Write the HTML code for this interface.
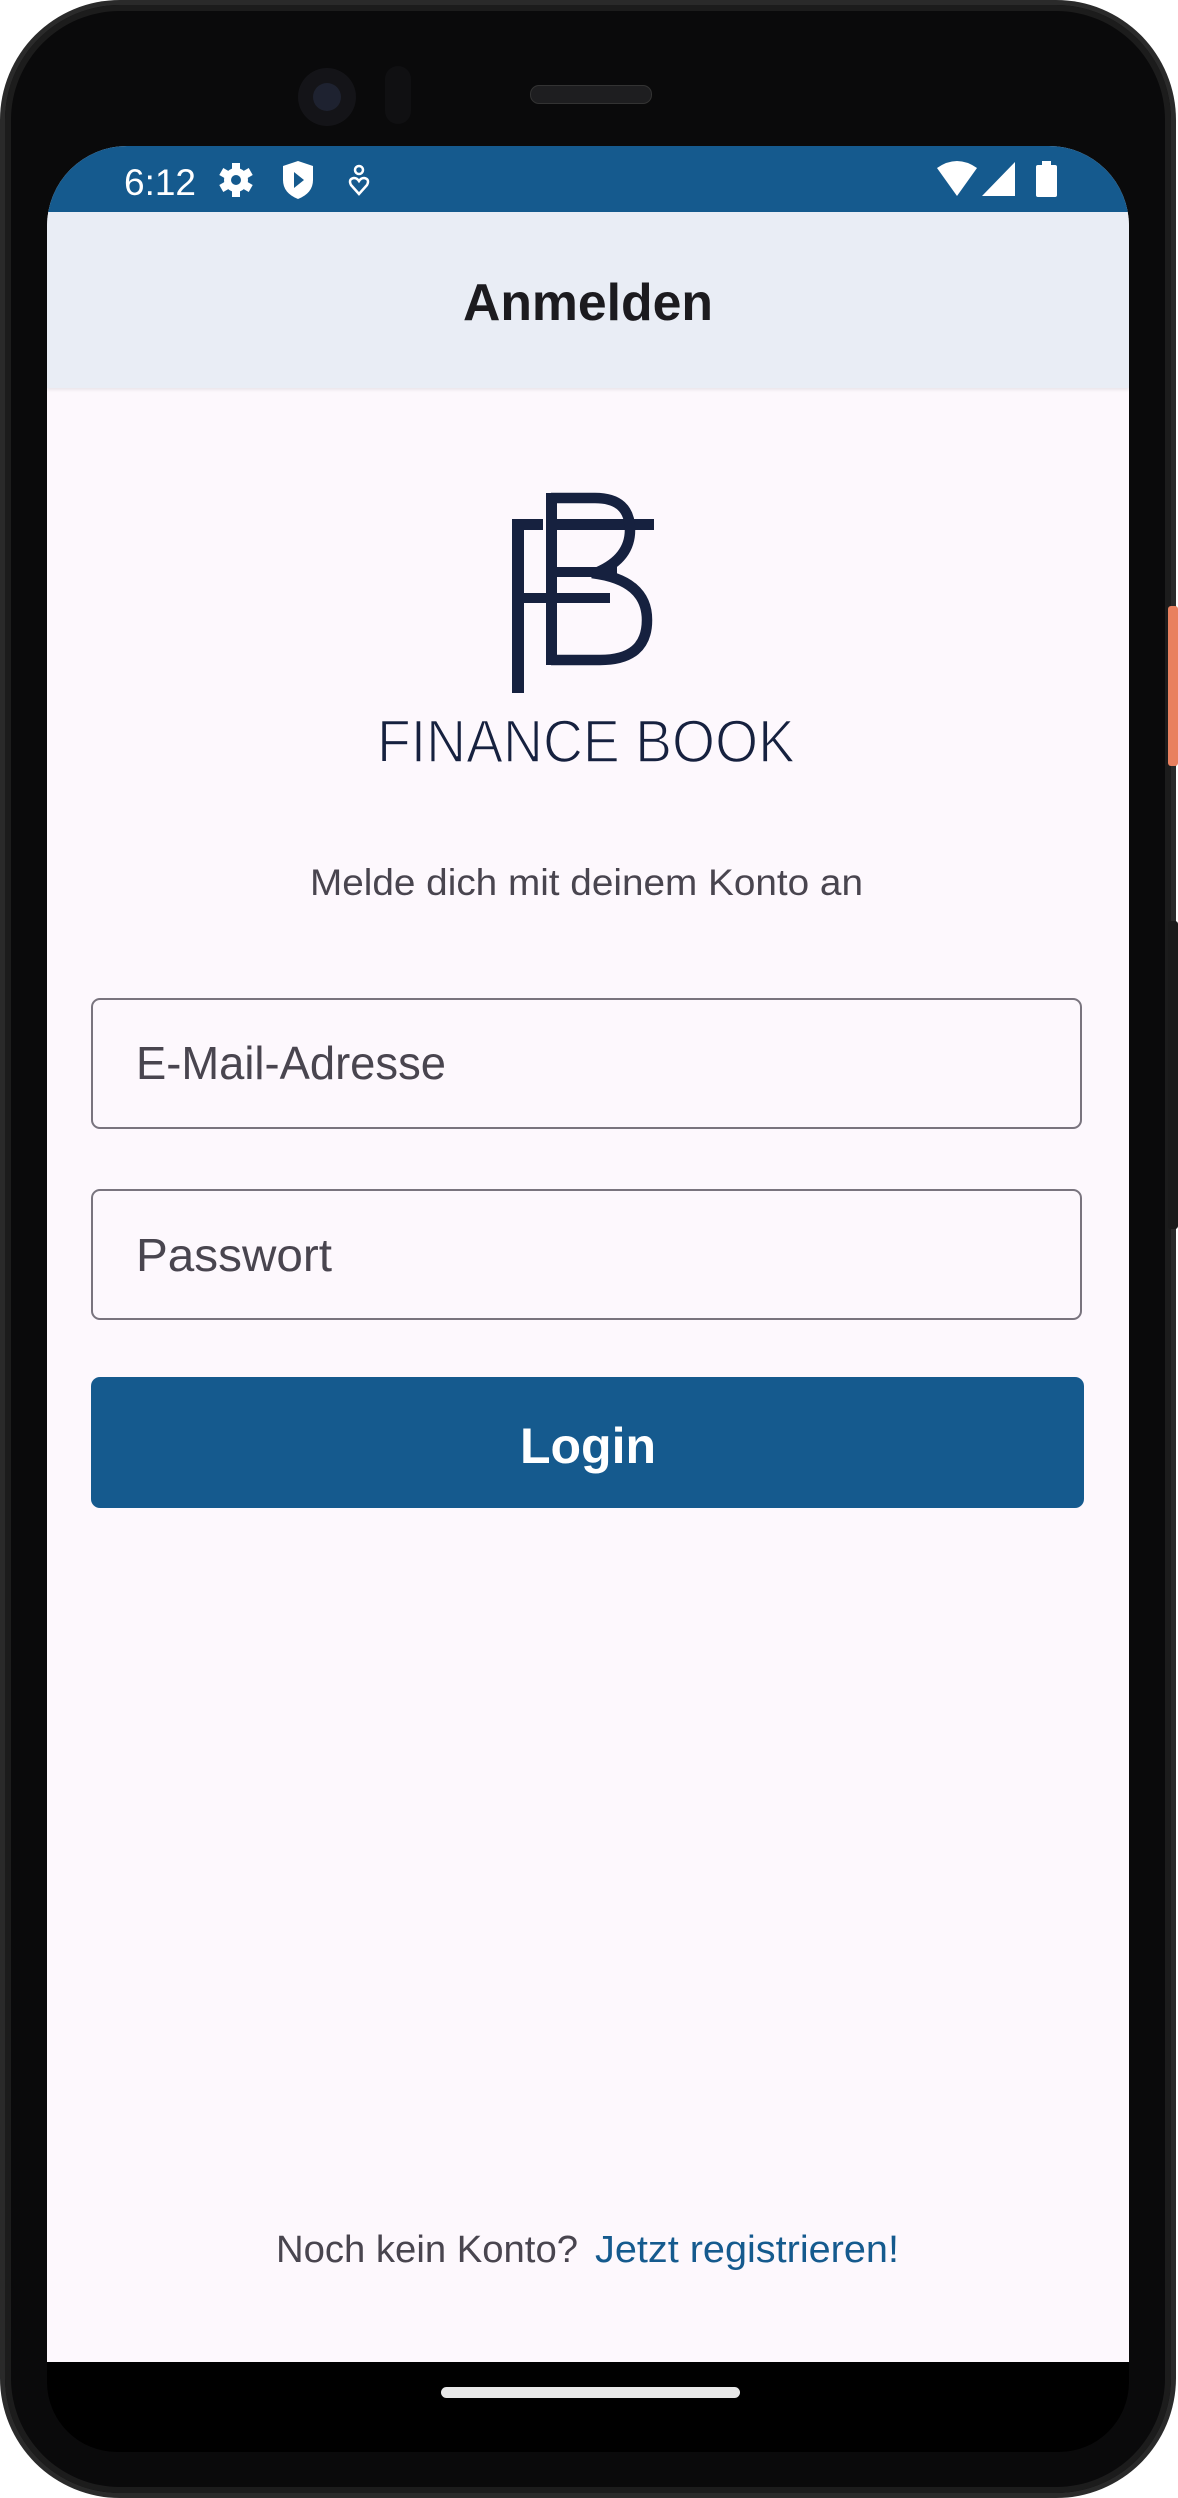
<!DOCTYPE html>
<html><head><meta charset="utf-8">
<style>
html,body{margin:0;padding:0;background:#fff;}
body{width:1178px;height:2498px;position:relative;overflow:hidden;font-family:"Liberation Sans",Roboto,sans-serif;}
.abs{position:absolute;}
</style></head>
<body>
<div class="abs" style="left:0;top:0;width:1176px;height:2498px;border-radius:120px;background:#2a2a2a;"></div>
<div class="abs" style="left:5px;top:5px;width:1166px;height:2488px;border-radius:115px;background:#0a0a0b;box-shadow:inset 0 0 0 6px #1c1c1c;"></div>
<div class="abs" style="left:1168px;top:606px;width:10px;height:160px;background:#e9805f;border-radius:3px;"></div>
<div class="abs" style="left:1168px;top:921px;width:10px;height:308px;background:#1a1a1a;border-radius:3px;"></div>
<div class="abs" style="left:298px;top:68px;width:58px;height:58px;border-radius:50%;background:#141418;"></div>
<div class="abs" style="left:313px;top:83px;width:28px;height:28px;border-radius:50%;background:#1e2230;"></div>
<div class="abs" style="left:385px;top:66px;width:26px;height:58px;border-radius:13px;background:#101012;"></div>
<div class="abs" style="left:530px;top:85px;width:120px;height:17px;border-radius:9px;background:#1e1e20;border:1px solid #333;"></div>

<div class="abs" style="left:47px;top:146px;width:1082px;height:2216px;background:#fdf8fd;border-radius:80px 80px 0 0;overflow:hidden;">
  <div class="abs" style="left:0;top:0;width:1082px;height:66px;background:#155a8e;"></div>
  <div class="abs" style="left:0;top:66px;width:1082px;height:176px;background:#e9edf5;box-shadow:0 2px 3px rgba(0,0,0,0.08);"></div>
</div>

<svg class="abs" style="left:0;top:0" width="1178" height="400">
  <text x="124" y="195" font-family="Liberation Sans,sans-serif" font-size="37" fill="#fff">6:12</text>
  <g transform="translate(236,180)" fill="#fff">
    <circle r="12"/>
    <g><rect x="-4" y="-17" width="8" height="34"/><rect x="-4" y="-17" width="8" height="34" transform="rotate(60)"/><rect x="-4" y="-17" width="8" height="34" transform="rotate(120)"/></g>
    <circle r="5" fill="#155a8e"/>
  </g>
  <path d="M283 166 L298 161 L313 166 L313 180 Q313 193 298 199 Q283 193 283 180 Z" fill="#fff"/>
  <path d="M294 172 L304 180 L294 188 Z" fill="#155a8e"/>
  <circle cx="359" cy="170" r="4" fill="none" stroke="#fff" stroke-width="2.5"/>
  <path d="M359 194 L351 185 Q348 179 354 178 Q357 178 359 181 Q361 178 364 178 Q370 179 367 185 Z" fill="none" stroke="#fff" stroke-width="2.5"/>
  <path d="M937 168 Q957 154 977 168 L957 196 Z" fill="#fff"/>
  <path d="M982 196 L1015 162 L1015 196 Z" fill="#fff"/>
  <rect x="1036" y="165" width="21" height="32" rx="2" fill="#fff"/>
  <rect x="1042" y="161" width="9" height="5" fill="#fff"/>
  <text x="588" y="320" text-anchor="middle" textLength="250" lengthAdjust="spacingAndGlyphs" font-family="Liberation Sans,sans-serif" font-size="52" font-weight="bold" fill="#1c1b1f">Anmelden</text>
</svg>

<svg class="abs" style="left:0;top:480px" width="1178" height="300">
  <g fill="#16213f">
    <rect x="512" y="39" width="12" height="174"/>
    <rect x="512" y="39" width="31" height="11"/>
    <rect x="524" y="113" width="86" height="10"/>
    <rect x="546" y="13" width="11" height="172"/>
    <rect x="557" y="39" width="97" height="11"/>
    <rect x="557" y="87" width="60" height="10"/>
  </g>
  <path d="M551 18 L595 18 Q630 18 630 50 Q630 78 598 92 M592 93 Q647 100 647 140 Q647 180 600 180 L551 180" fill="none" stroke="#16213f" stroke-width="10.5"/>
  <text x="377" y="282" textLength="418" lengthAdjust="spacingAndGlyphs" font-family="Liberation Sans,sans-serif" font-size="60" fill="#16213f" stroke="#fdf8fd" stroke-width="1.6">FINANCE BOOK</text>
</svg>

<svg class="abs" style="left:0;top:840px" width="1178" height="70">
  <text x="310" y="55" textLength="553" lengthAdjust="spacingAndGlyphs" font-family="Liberation Sans,sans-serif" font-size="37" fill="#49454f">Melde dich mit deinem Konto an</text>
</svg>

<div class="abs" style="left:91px;top:998px;width:987px;height:127px;border:2px solid #79747e;border-radius:9px;"></div>
<div class="abs" style="left:91px;top:1189px;width:987px;height:127px;border:2px solid #79747e;border-radius:9px;"></div>
<svg class="abs" style="left:0;top:997px" width="1178" height="540">
  <text x="136" y="82" textLength="310" lengthAdjust="spacingAndGlyphs" font-family="Liberation Sans,sans-serif" font-size="46" fill="#49454f">E-Mail-Adresse</text>
  <text x="136" y="274" textLength="196" lengthAdjust="spacingAndGlyphs" font-family="Liberation Sans,sans-serif" font-size="46" fill="#49454f">Passwort</text>
</svg>
<div class="abs" style="left:91px;top:1377px;width:993px;height:131px;background:#155a8e;border-radius:9px;"></div>
<svg class="abs" style="left:0;top:1377px" width="1178" height="140">
  <text x="588" y="86" text-anchor="middle" font-family="Liberation Sans,sans-serif" font-size="50" font-weight="bold" fill="#fff">Login</text>
</svg>

<svg class="abs" style="left:0;top:2200px" width="1178" height="80">
  <text x="276" y="62" textLength="302" lengthAdjust="spacingAndGlyphs" font-family="Liberation Sans,sans-serif" font-size="38" fill="#49454f">Noch kein Konto?</text>
  <text x="595" y="62" textLength="304" lengthAdjust="spacingAndGlyphs" font-family="Liberation Sans,sans-serif" font-size="38" fill="#155a8e">Jetzt registrieren!</text>
</svg>

<div class="abs" style="left:47px;top:2362px;width:1082px;height:90px;background:#000;border-radius:0 0 70px 70px;"></div>
<div class="abs" style="left:441px;top:2387px;width:299px;height:11px;background:#e8e8e8;border-radius:6px;"></div>
</body></html>
